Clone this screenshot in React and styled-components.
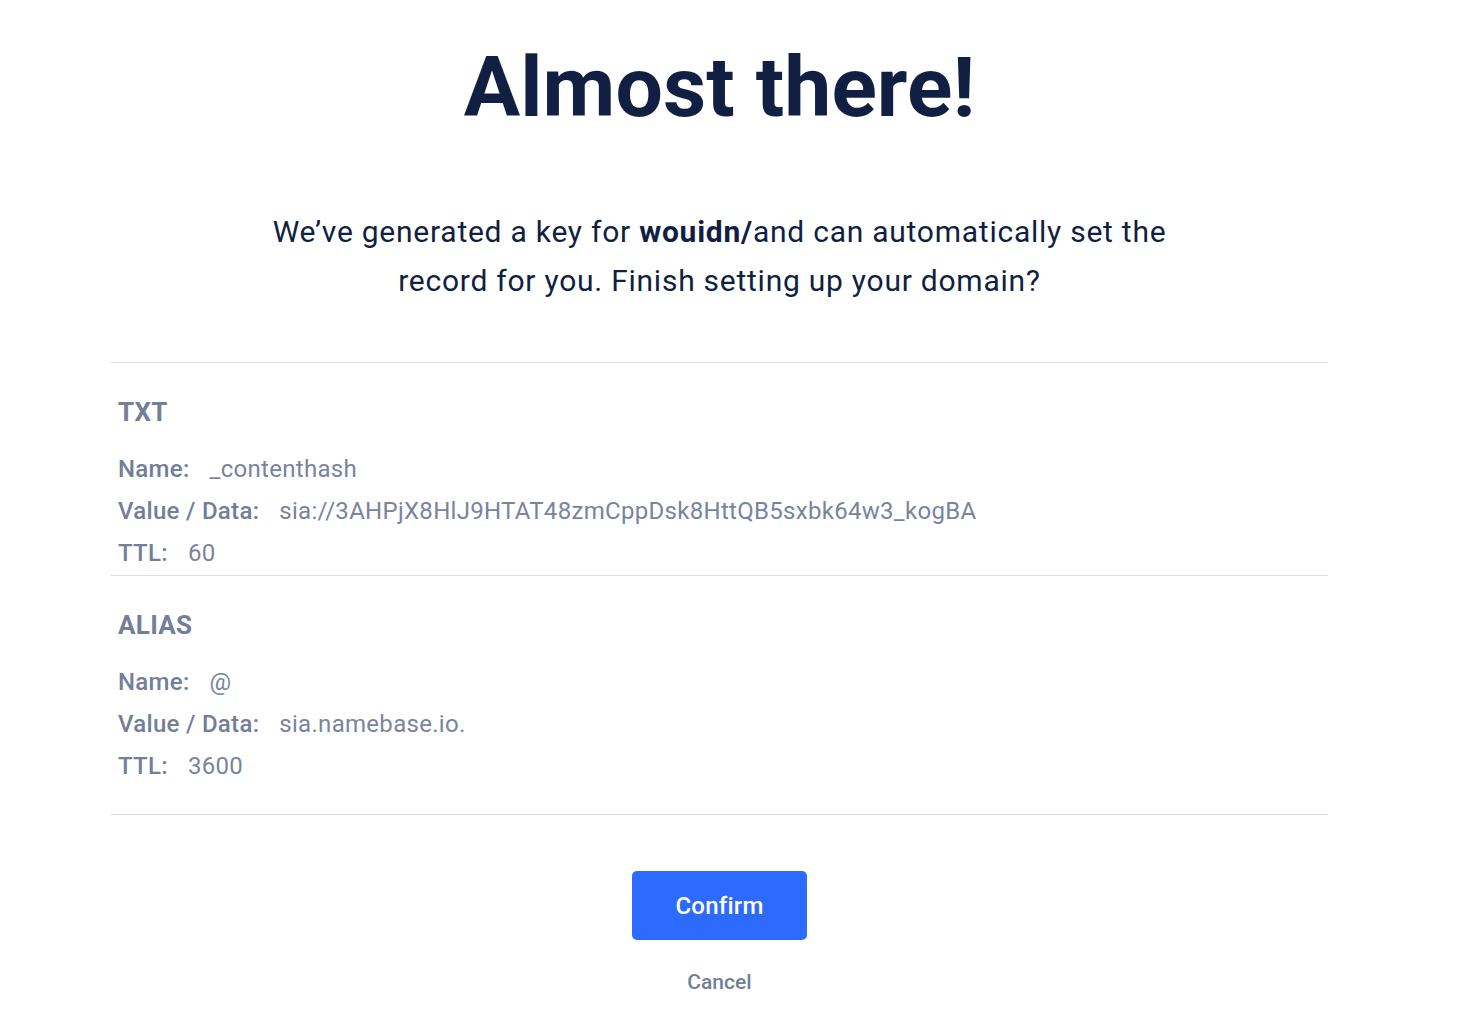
import styled, { createGlobalStyle } from 'styled-components';

const GlobalStyle = createGlobalStyle`
    body {
        margin: 0;
        background: #ffffff;
        font-family: Roboto, "Liberation Sans", sans-serif;
    }
`;

const records = [
    {
        type: 'TXT',
        fields: [
            ['Name:', '_contenthash'],
            ['Value / Data:', 'sia://3AHPjX8HlJ9HTAT48zmCppDsk8HttQB5sxbk64w3_kogBA'],
            ['TTL:', '60'],
        ],
    },
    {
        type: 'ALIAS',
        fields: [
            ['Name:', '@'],
            ['Value / Data:', 'sia.namebase.io.'],
            ['TTL:', '3600'],
        ],
    },
];

const App = () => {
    return (
        <>
            <GlobalStyle />
            <Page>
                <Title>Almost there!</Title>
                <Intro>
                    We’ve generated a key for <strong>wouidn/</strong>and can automatically set the
                    <br />
                    record for you. Finish setting up your domain?
                </Intro>
                <Records>
                    {records.map((record, i) => (
                        <Record key={record.type} $last={i === records.length - 1}>
                            <RecordType>{record.type}</RecordType>
                            {record.fields.map(([label, value]) => (
                                <Field key={label}>
                                    <FieldLabel>{label}</FieldLabel>
                                    <FieldValue>{value}</FieldValue>
                                </Field>
                            ))}
                        </Record>
                    ))}
                </Records>
                <Actions>
                    <ConfirmButton type='button'>Confirm</ConfirmButton>
                    <CancelButton type='button'>Cancel</CancelButton>
                </Actions>
            </Page>
        </>
    );
};

const Page = styled.div`
    width: 1439px;
    padding-top: 46px;
    display: flex;
    flex-direction: column;
    align-items: center;
`;

const Title = styled.h1`
    margin: 0;
    font-size: 84px;
    line-height: 84px;
    font-weight: 700;
    letter-spacing: 0.1px;
    color: #101f42;
`;

const Intro = styled.p`
    margin: 77px 0 0;
    font-size: 30px;
    line-height: 49px;
    letter-spacing: 0.75px;
    text-align: center;
    color: #101f42;

    strong {
        font-weight: 700;
    }
`;

const Records = styled.div`
    margin-top: 57px;
    width: 1217px;
    border-top: 1px solid #d9dde4;
`;

const Record = styled.div`
    padding: 35px 7px ${p => (p.$last ? '27px' : '1px')};
    border-bottom: 1px solid #d9dde4;
`;

const RecordType = styled.h3`
    margin: 0 0 22px;
    font-size: 26px;
    line-height: 28px;
    font-weight: 700;
    letter-spacing: 0.3px;
    color: #737e98;
`;

const Field = styled.div`
    display: flex;
    gap: 20px;
    font-size: 24px;
    line-height: 42px;
    letter-spacing: 0.3px;
`;

const FieldLabel = styled.span`
    font-weight: 500;
    color: #737e98;
`;

const FieldValue = styled.span`
    font-weight: 400;
    color: #7a849d;
`;

const Actions = styled.div`
    margin-top: 56px;
    display: flex;
    flex-direction: column;
    align-items: center;
`;

const ConfirmButton = styled.button`
    width: 175px;
    height: 69px;
    border: none;
    border-radius: 5px;
    background: #2d6bfe;
    color: #ffffff;
    font-family: Roboto, "Liberation Sans", sans-serif;
    font-size: 24px;
    letter-spacing: 0.2px;
    font-weight: 500;
    cursor: pointer;
`;

const CancelButton = styled.button`
    margin-top: 27px;
    padding: 0;
    border: none;
    background: none;
    color: #737e98;
    font-family: Roboto, "Liberation Sans", sans-serif;
    font-size: 21px;
    line-height: 30px;
    font-weight: 500;
    cursor: pointer;
`;

export default App;
